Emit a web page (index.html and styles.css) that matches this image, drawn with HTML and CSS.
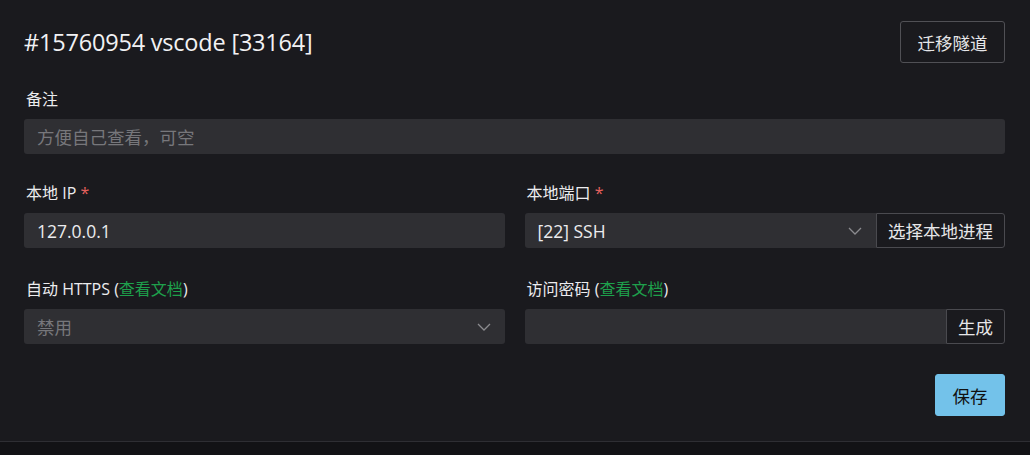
FILE: index.html
```html
<!DOCTYPE html>
<html lang="zh-CN">
<head>
<meta charset="utf-8">
<link rel="stylesheet" href="styles.css">
</head>
<body>
<div class="panel">
  <div class="header">
    <h1 class="title">#15760954 vscode [33164]</h1>
    <button class="btn btn-outline btn-lg">迁移隧道</button>
  </div>

  <div class="field">
    <label class="label">备注</label>
    <div class="input"><span class="placeholder">方便自己查看，可空</span></div>
  </div>

  <div class="grid">
    <div class="field">
      <label class="label">本地 IP <span class="req">*</span></label>
      <div class="input"><span class="value">127.0.0.1</span></div>
    </div>
    <div class="field">
      <label class="label">本地端口 <span class="req">*</span></label>
      <div class="group">
        <div class="input select"><span class="value">[22] SSH</span>
          <svg class="chev" width="14" height="8" viewBox="0 0 14 8"><path d="M1 1l6 6 6-6" fill="none" stroke="#8b8b8f" stroke-width="1.3"/></svg>
        </div>
        <button class="btn btn-addon">选择本地进程</button>
      </div>
    </div>
    <div class="field">
      <label class="label">自动 HTTPS (<a class="link">查看文档</a>)</label>
      <div class="input select"><span class="placeholder">禁用</span>
        <svg class="chev" width="14" height="8" viewBox="0 0 14 8"><path d="M1 1l6 6 6-6" fill="none" stroke="#8b8b8f" stroke-width="1.3"/></svg>
      </div>
    </div>
    <div class="field">
      <label class="label">访问密码 (<a class="link">查看文档</a>)</label>
      <div class="group">
        <div class="input"></div>
        <button class="btn btn-addon">生成</button>
      </div>
    </div>
  </div>

  <div class="footer">
    <button class="btn btn-primary">保存</button>
  </div>
</div>
</body>
</html>
```

FILE: styles.css
```css
* { box-sizing: border-box; }
html, body { margin: 0; padding: 0; }
body {
  background: #121215;
  font-family: "Open Sans", "Noto Sans CJK SC", sans-serif;
  color: #e8e8ea;
  width: 1030px;
  height: 455px;
  overflow: hidden;
}
.panel {
  background: #1a1a1e;
  height: 442px;
  border-bottom: 1px solid #2e2e33;
  padding: 21px 25px 0 24px;
}
.header {
  display: flex;
  justify-content: space-between;
  align-items: center;
  height: 42px;
  margin-bottom: 25px;
}
.title {
  margin: 0;
  font-size: 23.5px;
  font-weight: 400;
  color: #f2f2f4;
  letter-spacing: -0.2px;
}
.btn {
  font-family: "Open Sans", "Noto Sans CJK SC", sans-serif;
  font-size: 17.5px;
  color: #e6e6e8;
  background: transparent;
  border: 1px solid #505055;
  border-radius: 3px;
  cursor: pointer;
  padding: 0;
}
.btn-lg { width: 105px; height: 42px; }
.field { display: flex; flex-direction: column; }
.label {
  font-size: 16px;
  line-height: 22px;
  margin-bottom: 9px;
  padding-left: 2px;
  color: #ececee;
}
.req { color: #e5605d; }
.link { color: #1ea04c; }
.input {
  height: 35px;
  background: #2f2f33;
  border-radius: 3px;
  display: flex;
  align-items: center;
  padding: 0 13px;
  font-size: 17.5px;
}
.placeholder { color: #77777b; }
.value { color: #ececee; }
.select { justify-content: space-between; padding-right: 14px; }
.chev { display: block; }
.grid {
  display: grid;
  grid-template-columns: 1fr 1fr;
  column-gap: 20px;
  row-gap: 30px;
  margin-top: 28px;
}
.group { display: flex; height: 35px; }
.group .input { flex: 1; border-radius: 3px 0 0 3px; }
.btn-addon {
  height: 35px;
  padding: 0 11px;
  border-radius: 0 3px 3px 0;
  border-color: #4a4a4f;
  background: #1a1a1e;
}
.footer {
  display: flex;
  justify-content: flex-end;
  margin-top: 30px;
}
.btn-primary {
  width: 70px;
  height: 42px;
  background: #73c2ea;
  border-color: #73c2ea;
  color: #111;
}
```
